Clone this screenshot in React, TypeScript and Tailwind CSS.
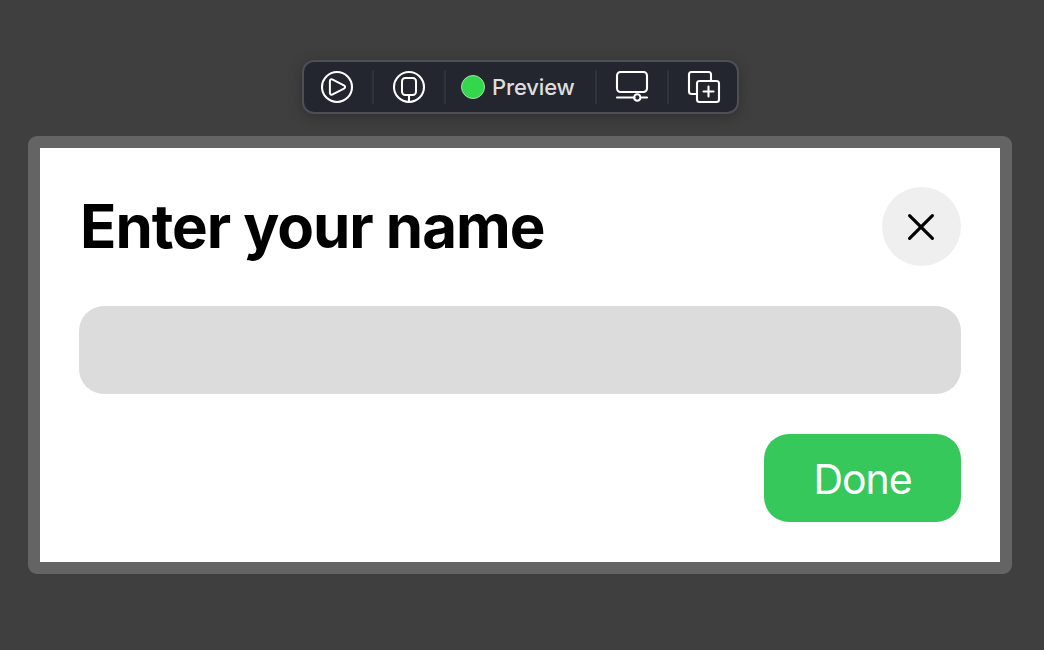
import type { ReactNode } from "react";

function Icon({ children }: { children: ReactNode }) {
  return (
    <svg width="34" height="34" viewBox="0 0 34 34" fill="none" stroke="#fff" strokeWidth="2.1" strokeLinecap="round" strokeLinejoin="round">
      {children}
    </svg>
  );
}

function Divider() {
  return <div className="h-[34px] w-[2px] shrink-0 bg-[#2f323a]" />;
}

function Toolbar() {
  return (
    <div className="ml-[302px] flex h-[54px] w-[437px] items-center rounded-[12px] border-2 border-[#4d4f54] bg-[#23262e] shadow-[0_3px_14px_rgba(0,0,0,0.25)]">
      <button className="flex w-[68px] shrink-0 justify-center pr-[2px]" aria-label="Play">
        <Icon>
          <circle cx="17" cy="17" r="15" />
          <path d="M9.9 11.2C9.9 9.4 11.3 8.9 12.7 9.6L23.9 15.3C25.5 16.1 25.5 17.9 23.9 18.7L12.7 24.4C11.3 25.1 9.9 24.6 9.9 22.8Z" strokeWidth="2" />
        </Icon>
      </button>
      <Divider />
      <button className="flex w-[70px] shrink-0 justify-center" aria-label="Inspect">
        <Icon>
          <circle cx="17" cy="17" r="15" />
          <rect x="10" y="8" width="14" height="17" rx="3.2" strokeWidth="2" />
          <path d="M17 25V31" strokeLinecap="butt" />
        </Icon>
      </button>
      <Divider />
      <button className="flex w-[149px] shrink-0 items-center pl-[15px]">
        <span className="size-6 shrink-0 rounded-full border-[1.5px] border-[#a9dcae] bg-[#32d74b]" />
        <span className="ml-[7px] font-['Inter'] text-[22px] leading-[26px] font-medium tracking-[-0.15px] text-[#dededf]">Preview</span>
      </button>
      <Divider />
      <button className="flex w-[70px] shrink-0 justify-center" aria-label="Display settings">
        <Icon>
          <rect x="2" y="2" width="30" height="20" rx="3.5" />
          <path d="M2 27.5H19.5M27 27.5H32" />
          <circle cx="22.3" cy="27.5" r="3.2" />
        </Icon>
      </button>
      <Divider />
      <button className="flex w-[68px] shrink-0 justify-center pl-[2px]" aria-label="Duplicate">
        <Icon>
          <path d="M10 24H4.5A2.5 2.5 0 0 1 2 21.5V4.5A2.5 2.5 0 0 1 4.5 2H21.5A2.5 2.5 0 0 1 24 4.5V10" strokeLinecap="butt" />
          <rect x="10" y="11" width="22" height="21" rx="2.5" />
          <path d="M16.5 21.5H26.5M21.5 16.5V26.5" />
        </Icon>
      </button>
    </div>
  );
}

export default function App() {
  return (
    <main className="h-[650px] w-[1044px] overflow-hidden bg-[#3f3f3f] pt-[60px]">
      <Toolbar />
      <section className="mt-[22px] ml-[28px] h-[438px] w-[984px] rounded-[9px] bg-[#646464] p-3">
        <div className="flex h-[414px] flex-col bg-white px-[39px] pt-[39px]">
          <header className="flex h-[79px] items-center justify-between">
            <h1 className="pb-px pl-px font-['Inter'] text-[60px] leading-[72px] font-bold tracking-[-1.05px] whitespace-nowrap text-black">Enter your name</h1>
            <button className="flex size-[79px] shrink-0 items-center justify-center rounded-full bg-[#efefef] pr-[2px]" aria-label="Close">
              <svg width="28" height="28" viewBox="0 0 28 28" fill="none" stroke="#000" strokeWidth="3.2" strokeLinecap="round">
                <path d="M2.6 2.6L25.4 25.4M25.4 2.6L2.6 25.4" />
              </svg>
            </button>
          </header>
          <input className="mt-[40px] h-[88px] w-full shrink-0 rounded-[25px] bg-[#dcdcdc] px-6 font-['Inter'] text-[40px] outline-none" aria-label="Name" />
          <button className="mt-[40px] flex h-[88px] w-[197px] shrink-0 items-center justify-center self-end rounded-[25px] bg-[#37c85b] pt-[2px] font-['Inter'] text-[41px] leading-[50px] tracking-[-1.1px] text-white">
            Done
          </button>
        </div>
      </section>
    </main>
  );
}
